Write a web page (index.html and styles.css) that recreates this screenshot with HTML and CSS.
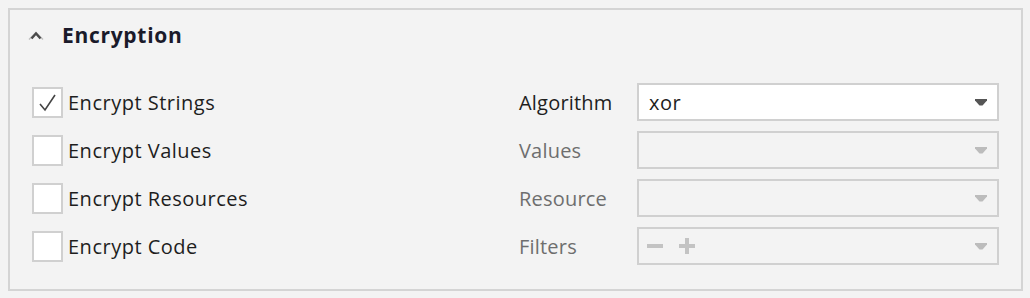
FILE: index.html
```html
<!DOCTYPE html>
<html lang="en">
<head>
    <meta charset="UTF-8">
    <meta name="viewport" content="width=device-width, initial-scale=1.0">
    <title>Encryption</title>
    <link rel="stylesheet" href="styles.css">
</head>
<body>
    <div class="panel">
        <div class="panel-head">
            <svg class="chevron" width="16" height="10" viewBox="0 0 16 10">
                <path d="M1 9.5 L8 2.5 L15 9.5" fill="none" stroke="#bdbdbd" stroke-width="1.4"/>
                <path d="M3.5 8.5 L8 3.5 L12.5 8.5" fill="none" stroke="#4a4a4a" stroke-width="2.4"/>
            </svg>
            <span class="panel-title">Encryption</span>
        </div>

        <div class="panel-body">
            <label class="check">
                <span class="box">
                    <svg width="27" height="27" viewBox="0 0 27 27">
                        <path d="M6 15 L11 21 L21 6" fill="none" stroke="#444" stroke-width="1.6"/>
                    </svg>
                </span>
                <span>Encrypt Strings</span>
            </label>
            <span class="field-label">Algorithm</span>
            <div class="combo">
                <span class="combo-text">xor</span>
                <svg class="arrow" width="12" height="7" viewBox="0 0 12 7"><path d="M0 0 H12 V1.5 L7.5 6.5 H4.5 L0 1.5 Z" fill="#555"/></svg>
            </div>

            <label class="check">
                <span class="box"></span>
                <span>Encrypt Values</span>
            </label>
            <span class="field-label disabled">Values</span>
            <div class="combo disabled">
                <span class="combo-text"></span>
                <svg class="arrow" width="12" height="7" viewBox="0 0 12 7"><path d="M0 0 H12 V1.5 L7.5 6.5 H4.5 L0 1.5 Z" fill="#bcbcbc"/></svg>
            </div>

            <label class="check">
                <span class="box"></span>
                <span>Encrypt Resources</span>
            </label>
            <span class="field-label disabled">Resource</span>
            <div class="combo disabled">
                <span class="combo-text"></span>
                <svg class="arrow" width="12" height="7" viewBox="0 0 12 7"><path d="M0 0 H12 V1.5 L7.5 6.5 H4.5 L0 1.5 Z" fill="#bcbcbc"/></svg>
            </div>

            <label class="check">
                <span class="box"></span>
                <span>Encrypt Code</span>
            </label>
            <span class="field-label disabled">Filters</span>
            <div class="combo disabled">
                <span class="combo-text tools">
                    <svg width="16" height="16" viewBox="0 0 16 16"><rect x="0" y="6" width="16" height="4" fill="#c3c3c3"/></svg>
                    <svg width="16" height="16" viewBox="0 0 16 16"><rect x="0" y="6" width="16" height="4" fill="#c3c3c3"/><rect x="6" y="0" width="4" height="16" fill="#c3c3c3"/></svg>
                </span>
                <svg class="arrow" width="12" height="7" viewBox="0 0 12 7"><path d="M0 0 H12 V1.5 L7.5 6.5 H4.5 L0 1.5 Z" fill="#bcbcbc"/></svg>
            </div>
        </div>
    </div>
</body>
</html>
```

FILE: styles.css
```css
body {
    margin: 0;
    background-color: #f3f3f3;
    font-family: "Open Sans", "Noto Sans", sans-serif;
    font-size: 20px;
    letter-spacing: 0.5px;
    color: #1e1e1e;
}

.panel {
    box-sizing: border-box;
    margin: 8px;
    width: 1015px;
    height: 283px;
    border: 2px solid #d4d4d4;
    background-color: #f3f3f3;
}

.panel-head {
    display: flex;
    align-items: center;
    height: 50px;
    padding-left: 18px;
    margin-bottom: 23px;
}

.chevron {
    display: block;
    margin-right: 18px;
}

.panel-title {
    font-weight: bold;
    font-size: 21px;
    letter-spacing: 0.7px;
    color: #1a1a2a;
}

.panel-body {
    display: grid;
    grid-template-columns: 487px 118px 362px;
    grid-auto-rows: 38px;
    row-gap: 10px;
    align-items: center;
    padding-left: 22px;
}

.check {
    display: flex;
    align-items: center;
    gap: 5px;
}

.box {
    box-sizing: border-box;
    width: 31px;
    height: 31px;
    border: 2px solid #d0d0d0;
    background-color: #fff;
}

.box svg {
    display: block;
}

.field-label {
    letter-spacing: 0.2px;
}

.field-label.disabled {
    color: #6e6e6e;
}

.combo {
    box-sizing: border-box;
    height: 38px;
    display: flex;
    align-items: center;
    justify-content: space-between;
    padding: 0 10px 0 10px;
    border: 2px solid #d0d0d0;
    background-color: #fff;
}

.combo.disabled {
    background-color: #f3f3f3;
    padding-left: 8px;
}

.tools {
    display: flex;
    gap: 16px;
}

.tools svg,
.arrow {
    display: block;
}
```
